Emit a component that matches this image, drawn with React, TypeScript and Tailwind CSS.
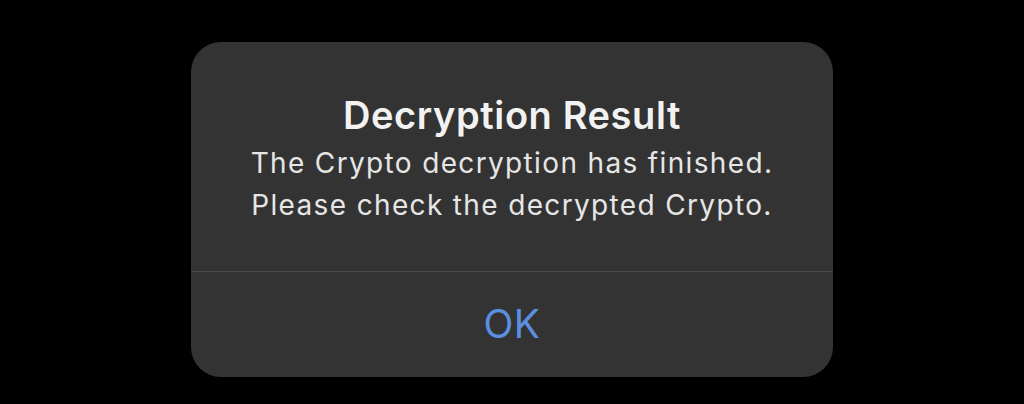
export default function App() {
  return (
    <div className="w-[1024px] h-[404px] bg-black flex items-start justify-center pt-[42px]">
      <div
        className="w-[642px] h-[335px] rounded-[30px] bg-[#333333] flex flex-col text-center"
        style={{ fontFamily: 'Inter, "Liberation Sans", Arial, sans-serif' }}
      >
        <div className="h-[229px] flex flex-col items-center pt-[50px]">
          <h1 className="text-[38px] leading-[46px] font-semibold text-[#f2f2f2] tracking-[0.6px]">Decryption Result</h1>
          <p className="mt-[4px] text-[28px] leading-[42px] text-[#e6e6e6] tracking-[1.35px]">
            The Crypto decryption has finished.
            <br />
            Please check the decrypted Crypto.
          </p>
        </div>
        <div className="h-px bg-[#4a4a4a]" />
        <button className="flex-1 flex items-center justify-center text-[39px] text-[#5b8fe0] tracking-[0.5px]">OK</button>
      </div>
    </div>
  )
}
